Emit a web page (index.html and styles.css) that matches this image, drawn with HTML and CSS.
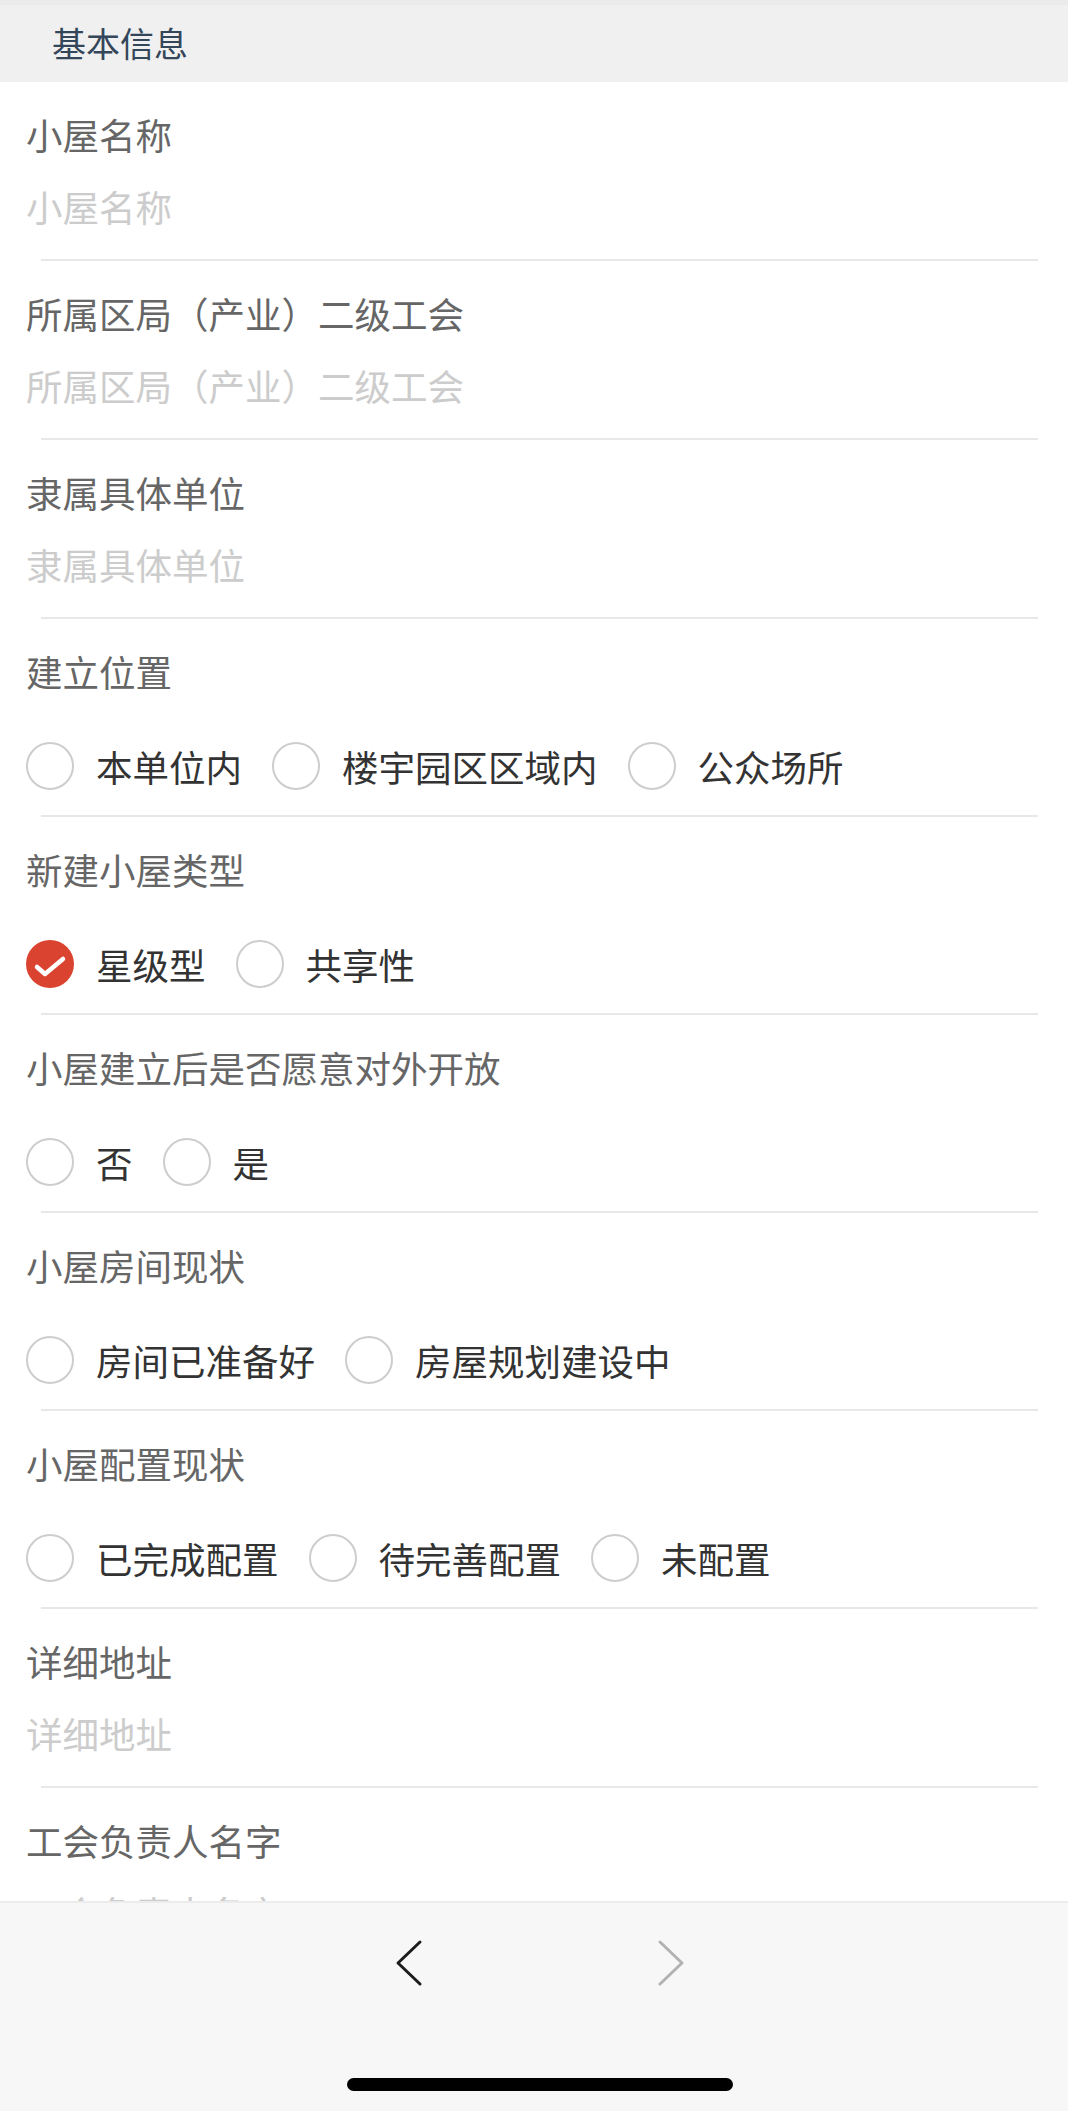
FILE: index.html
```html
<!DOCTYPE html>
<html lang="zh-CN">
<head>
  <meta charset="UTF-8" />
  <meta name="viewport" content="width=device-width, initial-scale=1.0" />
  <title>基本信息</title>
  <link rel="stylesheet" href="styles.css">
</head>
<body>
  <header class="section-title">基本信息</header>

  <form class="form">
    <div class="field">
      <div class="field-label">小屋名称</div>
      <input class="field-input" type="text" placeholder="小屋名称">
    </div>
    <div class="field">
      <div class="field-label">所属区局（产业）二级工会</div>
      <input class="field-input" type="text" placeholder="所属区局（产业）二级工会">
    </div>
    <div class="field">
      <div class="field-label">隶属具体单位</div>
      <input class="field-input" type="text" placeholder="隶属具体单位">
    </div>

    <div class="field">
      <div class="field-label">建立位置</div>
      <div class="options">
        <label class="option"><span class="radio"></span>本单位内</label>
        <label class="option"><span class="radio"></span>楼宇园区区域内</label>
        <label class="option"><span class="radio"></span>公众场所</label>
      </div>
    </div>
    <div class="field">
      <div class="field-label">新建小屋类型</div>
      <div class="options">
        <label class="option">
          <span class="radio checked">
            <svg viewBox="0 0 48 48" width="48" height="48"><circle cx="24" cy="24" r="24" fill="#d9432f"/><polyline points="11,27 19,34 37,19" fill="none" stroke="#fff" stroke-width="4.5" stroke-linecap="round" stroke-linejoin="round"/></svg>
          </span>星级型
        </label>
        <label class="option"><span class="radio"></span>共享性</label>
      </div>
    </div>
    <div class="field">
      <div class="field-label">小屋建立后是否愿意对外开放</div>
      <div class="options">
        <label class="option"><span class="radio"></span>否</label>
        <label class="option"><span class="radio"></span>是</label>
      </div>
    </div>
    <div class="field">
      <div class="field-label">小屋房间现状</div>
      <div class="options">
        <label class="option"><span class="radio"></span>房间已准备好</label>
        <label class="option"><span class="radio"></span>房屋规划建设中</label>
      </div>
    </div>
    <div class="field">
      <div class="field-label">小屋配置现状</div>
      <div class="options">
        <label class="option"><span class="radio"></span>已完成配置</label>
        <label class="option"><span class="radio"></span>待完善配置</label>
        <label class="option"><span class="radio"></span>未配置</label>
      </div>
    </div>

    <div class="field">
      <div class="field-label">详细地址</div>
      <input class="field-input" type="text" placeholder="详细地址">
    </div>
    <div class="field">
      <div class="field-label">工会负责人名字</div>
      <input class="field-input" type="text" placeholder="工会负责人名字">
    </div>
  </form>

  <nav class="toolbar">
    <div class="pager">
      <button class="pager-btn" type="button">
        <svg viewBox="0 0 28 48" width="28" height="48"><polyline points="25,3 3,24 25,45" fill="none" stroke="#1c1c1c" stroke-width="3" stroke-linecap="round" stroke-linejoin="round"/></svg>
      </button>
      <button class="pager-btn" type="button">
        <svg viewBox="0 0 28 48" width="28" height="48"><polyline points="3,3 25,24 3,45" fill="none" stroke="#b2b2b2" stroke-width="3" stroke-linecap="round" stroke-linejoin="round"/></svg>
      </button>
    </div>
    <div class="home-bar"></div>
  </nav>
</body>
</html>
```

FILE: styles.css
```css
body {
  margin: 0;
  padding: 0;
  background-color: #fff;
  font-family: "Noto Sans CJK SC", "Noto Sans", sans-serif;
}
.section-title {
  box-sizing: border-box;
  height: 82px;
  padding-left: 52px;
  line-height: 76px;
  font-size: 34px;
  color: #34465a;
  background-color: #f0f0f0;
  border-top: 5px solid #ebebeb;
}
.form {
  margin: 0;
}
.field {
  padding: 28px 0 0 26px;
}
.field::after {
  content: "";
  display: block;
  height: 2px;
  margin: 0 30px 0 15px;
  background-color: #e8e8e8;
}
.field-label {
  height: 50px;
  line-height: 50px;
  font-size: 36.5px;
  color: #666;
}
.field-input {
  display: block;
  box-sizing: border-box;
  width: 100%;
  height: 50px;
  margin: 21px 0 28px;
  padding: 0;
  border: none;
  outline: none;
  background: transparent;
  font-family: inherit;
  font-size: 36.5px;
  color: #333;
}
.field-input::placeholder {
  color: #ccc;
}
.options {
  display: flex;
  align-items: center;
  height: 48px;
  margin: 45px 0 25px;
}
.option {
  display: flex;
  align-items: center;
  margin-right: 30px;
  font-size: 36.5px;
  color: #333;
}
.radio {
  box-sizing: border-box;
  width: 48px;
  height: 48px;
  margin-right: 22px;
  border: 2px solid #cdcdcd;
  border-radius: 50%;
}
.radio.checked {
  border: none;
}
.radio svg {
  display: block;
}
.toolbar {
  position: fixed;
  left: 0;
  right: 0;
  bottom: 0;
  box-sizing: border-box;
  height: 210px;
  padding-left: 12px;
  background-color: #f7f7f7;
  border-top: 2px solid #ececec;
}
.pager {
  display: flex;
  justify-content: center;
  gap: 234px;
  padding-top: 36px;
}
.pager-btn {
  padding: 0;
  border: none;
  background: none;
}
.pager-btn svg {
  display: block;
}
.home-bar {
  width: 386px;
  height: 13px;
  margin: 91px auto 0;
  border-radius: 7px;
  background-color: #000;
}
```
